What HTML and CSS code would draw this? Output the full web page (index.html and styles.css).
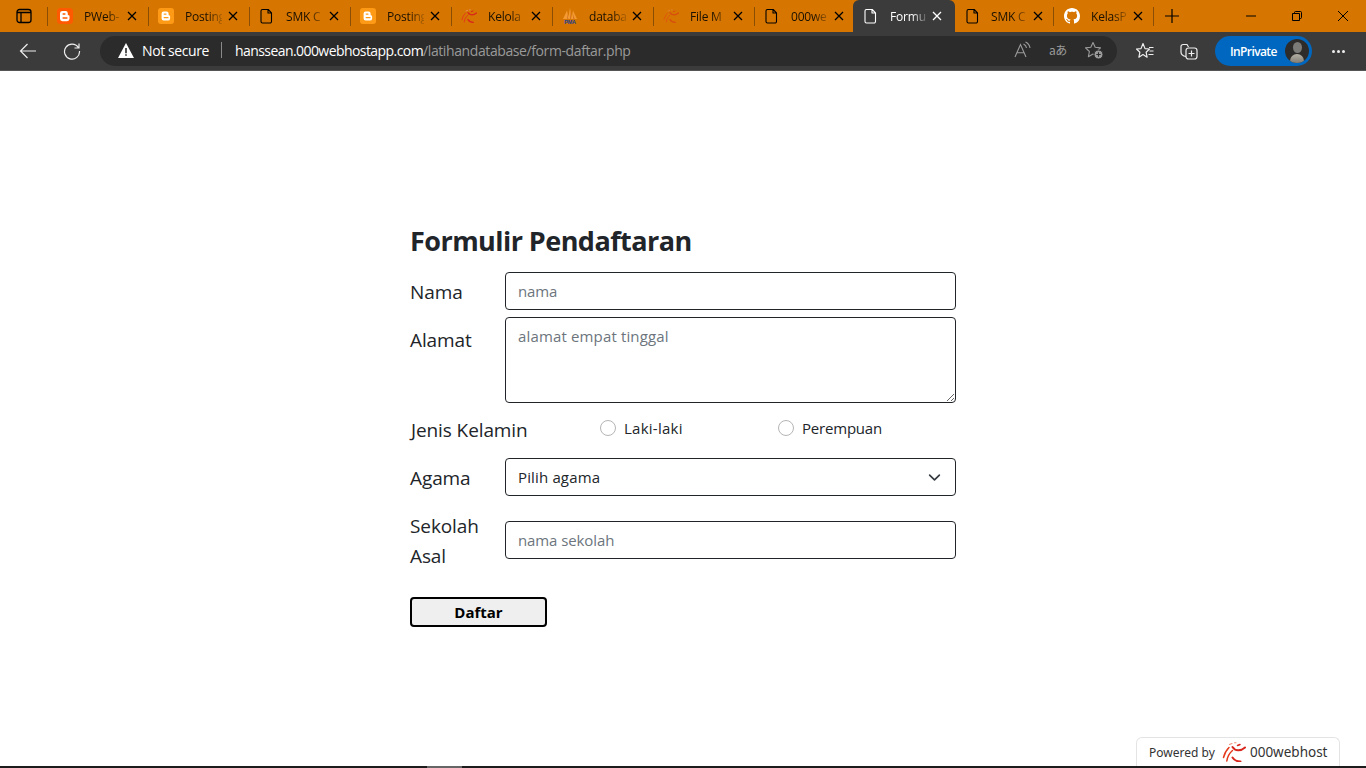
FILE: index.html
```html
<!DOCTYPE html>
<html lang="id">
<head>
<meta charset="utf-8">
<title>Formulir Pendaftaran</title>
<link rel="stylesheet" href="styles.css">
</head>
<body>
<svg class="defs" width="0" height="0" aria-hidden="true">
  <defs>
    <symbol id="i-blogger" viewBox="0 0 16 16">
      <rect width="16" height="16" rx="3" fill="#ff9a17"/>
      <path d="M5.6 3.6h3a2 2 0 0 1 2 2v1a.9.9 0 0 0 .9.9 .9.9 0 0 1 .6.9v2a2.2 2.2 0 0 1-2.2 2.2H5.600a2 2 0 0 1-2-2V5.600a2 2 0 0 1 2-2z" fill="#fff"/>
      <rect x="5.600" y="5.400" width="3" height="1.300" rx=".6" fill="#ff9a17"/>
      <rect x="5.600" y="9" width="5" height="1.300" rx=".6" fill="#ff9a17"/>
    </symbol>
    <symbol id="i-blogger2" viewBox="0 0 16 16">
      <rect width="16" height="16" rx="3.500" fill="#ff5a00"/>
      <path d="M5.400 3h3.200a2.200 2.200 0 0 1 2.200 2.200v1.200a.8.8 0 0 0 .8.8 .9.9 0 0 1 .9.9v2.700a2.400 2.400 0 0 1-2.400 2.400H5.400A2.400 2.400 0 0 1 3 10.800V5.400A2.400 2.400 0 0 1 5.400 3z" fill="#fff"/>
      <rect x="5.400" y="5.200" width="3.200" height="1.500" rx=".7" fill="#ff5a00"/>
      <rect x="5.400" y="9.300" width="5.200" height="1.500" rx=".7" fill="#ff5a00"/>
    </symbol>
    <symbol id="i-doc" viewBox="0 0 16 16">
      <path d="M3.500 1.500h5.700l3.300 3.400v8.600a1.500 1.500 0 0 1-1.500 1.500H3.500A1.500 1.500 0 0 1 2 13.500v-10.500A1.500 1.500 0 0 1 3.500 1.500zM9 1.700V5h3.300" fill="none" stroke="currentColor" stroke-width="1.100" stroke-linejoin="round"/>
    </symbol>
    <symbol id="i-x" viewBox="0 0 10 10">
      <path d="M1 1l8 8M9 1l-8 8" fill="none" stroke="currentColor" stroke-width="1.300"/>
    </symbol>
    <symbol id="i-000" viewBox="0 0 24 20">
      <g fill="none" stroke-linecap="round">
        <path d="M7 5.500C4.500 8 2.500 11 1.500 15.500" stroke="#e53a1c" stroke-width="1.500"/>
        <path d="M10.500 8.500C7.500 11 5.500 14.500 4.800 19" stroke="#e53a1c" stroke-width="1.500"/>
        <path d="M10.500 5C13 9 18.500 9.500 23 5.500" stroke="#d8261c" stroke-width="2"/>
        <path d="M10.500 15.500C12 18 15 19.500 18.500 19.500" stroke="#d8261c" stroke-width="2"/>
        <path d="M7.500 2.500 10 1.500M12.500 .8 14 .8" stroke="#f0907a" stroke-width="1.100"/>
        <path d="M15.500 3.500 18 2.500" stroke="#d8261c" stroke-width="1.500"/>
      </g>
    </symbol>
    <symbol id="i-pma" viewBox="0 0 16 16">
      <path d="M1 11 5 2.500 7 11zM6 11 8 0 10 11zM9.500 11 11 2.500 15 11z" fill="#f39a33"/>
      <path d="M5 5 6.300 11H5.500zM8.300 3 9.200 11H8.300zM11 6 12.500 11H11.500z" fill="#c8621a"/>
      <text class="pma-text" x="8" y="15.600" text-anchor="middle">PMA</text>
    </symbol>
    <symbol id="i-github" viewBox="0 0 16 16">
      <path fill="#fff" d="M8 0C3.580 0 0 3.580 0 8c0 3.540 2.290 6.530 5.470 7.590.400.070.550-.170.550-.380 0-.190-.010-.820-.010-1.490-2.010.370-2.530-.490-2.690-.940-.090-.230-.480-.940-.820-1.130-.280-.150-.680-.520-.010-.530.630-.010 1.080.580 1.230.820.720 1.210 1.870.870 2.330.660.070-.520.280-.870.510-1.070-1.780-.200-3.640-.890-3.640-3.950 0-.870.310-1.590.820-2.150-.080-.200-.360-1.020.080-2.120 0 0 .670-.210 2.200.820.640-.180 1.320-.270 2-.270s1.360.090 2 .270c1.530-1.040 2.200-.820 2.200-.820.440 1.100.160 1.920.080 2.120.510.560.820 1.270.820 2.150 0 3.070-1.870 3.750-3.650 3.950.290.250.540.730.540 1.480 0 1.070-.010 1.930-.010 2.200 0 .210.150.460.550.380A8.010 8.010 0 0 0 16 8c0-4.420-3.580-8-8-8z"/>
    </symbol>
  </defs>
</svg>

<div class="browser">
  <header class="tabstrip">
    <div class="strip-btn">
      <svg class="ic16" viewBox="0 0 16 16"><rect x="1" y="1.500" width="14" height="13" rx="2.500" fill="none" stroke="#000" stroke-width="1.300"/><path d="M1 4.500h14M5 4.500v9.500" fill="none" stroke="#000" stroke-width="1.300"/></svg>
    </div>
    <div class="tab"><svg class="fav"><use href="#i-blogger2"/></svg><span class="tab-title">PWeb-</span><svg class="close"><use href="#i-x"/></svg></div>
    <div class="tab"><svg class="fav"><use href="#i-blogger"/></svg><span class="tab-title">Posting</span><svg class="close"><use href="#i-x"/></svg></div>
    <div class="tab"><svg class="fav"><use href="#i-doc"/></svg><span class="tab-title">SMK C</span><svg class="close"><use href="#i-x"/></svg></div>
    <div class="tab"><svg class="fav"><use href="#i-blogger"/></svg><span class="tab-title">Posting</span><svg class="close"><use href="#i-x"/></svg></div>
    <div class="tab"><svg class="fav"><use href="#i-000"/></svg><span class="tab-title">Kelola</span><svg class="close"><use href="#i-x"/></svg></div>
    <div class="tab"><svg class="fav"><use href="#i-pma"/></svg><span class="tab-title">databa</span><svg class="close"><use href="#i-x"/></svg></div>
    <div class="tab"><svg class="fav faded"><use href="#i-000"/></svg><span class="tab-title">File M</span><svg class="close"><use href="#i-x"/></svg></div>
    <div class="tab"><svg class="fav"><use href="#i-doc"/></svg><span class="tab-title">000we</span><svg class="close"><use href="#i-x"/></svg></div>
    <div class="tab active"><svg class="fav"><use href="#i-doc"/></svg><span class="tab-title">Formu</span><svg class="close"><use href="#i-x"/></svg></div>
    <div class="tab after-active"><svg class="fav"><use href="#i-doc"/></svg><span class="tab-title">SMK C</span><svg class="close"><use href="#i-x"/></svg></div>
    <div class="tab last"><svg class="fav"><use href="#i-github"/></svg><span class="tab-title">KelasP</span><svg class="close"><use href="#i-x"/></svg></div>
    <div class="new-tab"><svg class="plus" viewBox="0 0 14 14"><path d="M7 0v14M0 7h14" fill="none" stroke="#000" stroke-width="1.200"/></svg></div>
    <div class="win-controls">
      <svg class="win" viewBox="0 0 10 10"><path d="M0 5h10" stroke="#000" fill="none"/></svg>
      <svg class="win" viewBox="0 0 10 10"><path d="M.5 2.500h7v7h-7zM2.500 2.500v-1a1 1 0 0 1 1-1h5a1 1 0 0 1 1 1v5a1 1 0 0 1-1 1h-1" stroke="#000" fill="none"/></svg>
      <svg class="win" viewBox="0 0 10 10"><path d="M0 0l10 10M10 0L0 10" stroke="#000" fill="none"/></svg>
    </div>
  </header>

  <nav class="toolbar">
    <div class="tool tool-back"><svg class="ic18" viewBox="0 0 18 18"><path d="M17 9H1.500M8.500 2 1.500 9l7 7" fill="none" stroke="#eee" stroke-width="1.200"/></svg></div>
    <div class="tool tool-refresh"><svg class="ic18" viewBox="0 0 18 18"><path d="M15.300 5.500A7.500 7.500 0 1 0 16.500 9M16 1.500v4.500h-4.500" fill="none" stroke="#eee" stroke-width="1.200"/></svg></div>
    <div class="omnibox">
      <svg class="warn" viewBox="0 0 16 15"><path d="M8 0 16 15H0z" fill="#fff"/><path d="M7.200 5h1.600v5.200H7.200zM7.200 11.200h1.600v1.600H7.200z" fill="#2b2b2b"/></svg>
      <span class="not-secure">Not secure</span>
      <span class="omni-sep"></span>
      <span class="url"><span class="url-host">hanssean.000webhostapp.com</span><span class="url-path">/latihandatabase/form-daftar.php</span></span>
      <div class="omni-actions">
        <svg class="ic18" viewBox="0 0 18 18"><path d="M2 16 7.500 3.500 13 16M4 11.800h7M10.500 3a5 5 0 0 1 3 4M12.500 1a8 8 0 0 1 4.500 6" fill="none" stroke="#9b9b9b" stroke-width="1.100"/></svg>
        <span class="translate">aあ</span>
        <svg class="ic18" viewBox="0 0 18 18"><path d="M8 1.500 10.200 6.300l5.300.600-3.900 3.600 1 5.200L8 13l-4.600 2.700 1-5.200L.5 6.900l5.300-.600z" fill="none" stroke="#9b9b9b" stroke-width="1.100" stroke-linejoin="round"/><circle cx="13.500" cy="13.500" r="4.500" fill="#9b9b9b" stroke="#2b2b2b" stroke-width="1"/><path d="M13.500 11.300v4.400M11.300 13.500h4.400" stroke="#2b2b2b" stroke-width="1.100"/></svg>
      </div>
    </div>
    <div class="tool tool-favs"><svg class="ic18" viewBox="0 0 18 18"><path d="M7 1.500 9 6.600l4.500.400-3.400 3.200 1 5L7 12.500 2.900 15.200l1-5L.5 7l4.500-.400z" fill="none" stroke="#eee" stroke-width="1.200" stroke-linejoin="round"/><path d="M13 5.500h4.500M13.500 9h4M12.500 12.500h5" stroke="#eee" stroke-width="1.200" fill="none"/></svg></div>
    <div class="tool tool-coll"><svg class="ic18" viewBox="0 0 18 18"><path d="M6 14.500C3 14 1 13 1 10V4.500a2 2 0 0 1 2-2h4l1.500 2.500" fill="none" stroke="#eee" stroke-width="1.200"/><rect x="6" y="6" width="11" height="11" rx="2.500" fill="none" stroke="#eee" stroke-width="1.200"/><path d="M11.500 8.500v6M8.500 11.500h6" stroke="#eee" stroke-width="1.200" fill="none"/></svg></div>
    <div class="inprivate">
      <span class="inprivate-text">InPrivate</span>
      <span class="avatar"><span class="avatar-head"></span><span class="avatar-body"></span></span>
    </div>
    <div class="more"><span class="dot"></span><span class="dot"></span><span class="dot"></span></div>
  </nav>

  <main class="page">
    <form class="form">
      <h1 class="form-title">Formulir Pendaftaran</h1>
      <div class="row">
        <label class="label label-nudge" for="nama">Nama</label>
        <input class="control" id="nama" type="text" placeholder="nama">
      </div>
      <div class="row row-top">
        <label class="label label-top" for="alamat">Alamat</label>
        <textarea class="control area" id="alamat" placeholder="alamat empat tinggal"></textarea>
      </div>
      <div class="row row-radio">
        <span class="label label-wide">Jenis Kelamin</span>
        <label class="radio"><input class="radio-input" type="radio" name="jk"><span class="radio-a">Laki-laki</span></label>
        <label class="radio"><input class="radio-input" type="radio" name="jk"><span class="radio-b">Perempuan</span></label>
      </div>
      <div class="row row-select">
        <label class="label label-nudge" for="agama">Agama</label>
        <div class="control select" id="agama"><span>Pilih agama</span><svg class="chev" viewBox="0 0 16 16"><path d="M2 5l6 6 6-6" fill="none" stroke="#343a40" stroke-width="2" stroke-linecap="round" stroke-linejoin="round"/></svg></div>
      </div>
      <div class="row row-school">
        <label class="label" for="sekolah">Sekolah Asal</label>
        <input class="control school" id="sekolah" type="text" placeholder="nama sekolah">
      </div>
      <button class="submit" type="button">Daftar</button>
    </form>
    <div class="badge">
      <span class="badge-text">Powered by</span>
      <svg class="badge-logo"><use href="#i-000"/></svg>
      <span class="badge-brand">000webhost</span>
    </div>
    <div class="taskbar-edge"><span class="edge-mark"></span></div>
  </main>
</div>
</body>
</html>
```
FILE: styles.css
```css
* { box-sizing: border-box; }
html, body { margin: 0; height: 100%; overflow: hidden; }
body { font-family: "Open Sans", "Noto Sans", "Liberation Sans", sans-serif; background: #fff; color: #212529; }
.defs { position: absolute; }
.browser { display: flex; flex-direction: column; height: 768px; }

/* tab strip */
.tabstrip { display: flex; align-items: stretch; height: 32px; background: #d67600; color: #000; }
.strip-btn { width: 47px; padding-left: 16px; display: flex; align-items: center; }
.ic16 { width: 16px; height: 16px; display: block; }
.ic18 { width: 18px; height: 18px; display: block; }
.plus { width: 14px; height: 14px; display: block; }
.tab { width: 101px; display: flex; align-items: center; padding-left: 10px; position: relative; font-size: 12px; letter-spacing: -.2px; color: #1a1000; }
.tab::before { content: ""; position: absolute; left: 0; top: 7px; height: 19px; width: 1px; background: #8a4f05; }
.tab.active::before, .tab.after-active::before { display: none; }
.tab.active { width: 102px; background: #3b3b3b; color: #fff; border-radius: 6px 6px 0 0; margin-left: -2px; }
.tab.after-active { width: 98px; }
.tab.last { width: 100px; padding-left: 11px; }
.fav { width: 16px; height: 16px; flex: none; color: #000; }
.tab.active .fav { color: #fff; }
.faded { opacity: .5; }
.pma-text { font-family: "Liberation Sans", sans-serif; font-size: 5.500px; font-weight: 700; fill: #24408e; letter-spacing: -.2px; }
.tab-title { margin-left: 11px; width: 37px; white-space: nowrap; flex: none;
  -webkit-mask-image: linear-gradient(to right, #000 60%, rgba(0,0,0,.2));
  mask-image: linear-gradient(to right, #000 60%, rgba(0,0,0,.2)); }
.active .tab-title, .last .tab-title { width: 36px; }
.after-active .tab-title { width: 36px; margin-left: 10px; }
.close { width: 10px; height: 10px; flex: none; margin-left: 6px; color: #000; }
.tab.active .close { color: #fff; }
.new-tab { width: 39px; display: flex; align-items: center; padding-left: 12px; position: relative; }
.new-tab::before { content: ""; position: absolute; left: 0; top: 7px; height: 19px; width: 1px; background: #8a4f05; }
.win-controls { margin-left: auto; display: flex; align-items: center; padding-right: 18px; gap: 36px; }
.win { width: 10px; height: 10px; display: block; }

/* toolbar */
.toolbar { display: flex; align-items: center; height: 39px; background: #3b3b3b; color: #fff; border-bottom: 1px solid #555; }
.tool { display: flex; align-items: center; justify-content: center; flex: none; }
.tool-back { width: 56px; }
.tool-refresh { width: 32px; }
.tool-favs { width: 56px; }
.tool-coll { width: 32px; }
.omnibox { flex: none; margin-left: 12px; width: 1017px; height: 30px; border-radius: 15px; background: #2b2b2b; display: flex; align-items: center; padding: 0 14px 2px 18px; font-size: 14px; }
.warn { width: 16px; height: 15px; flex: none; }
.not-secure { margin-left: 8px; white-space: nowrap; letter-spacing: -.4px; }
.omni-sep { width: 1px; height: 16px; background: #8a8a8a; margin: 0 13px 0 12px; flex: none; }
.url { white-space: nowrap; }
.url-host { color: #fff; letter-spacing: -.57px; }
.url-path { color: #9a9a9a; letter-spacing: -.4px; }
.omni-actions { margin-left: auto; display: flex; align-items: center; gap: 18px; }
.translate { width: 18px; font-family: "Noto Sans CJK JP", "Noto Sans", sans-serif; font-size: 12px; line-height: 18px; color: #9b9b9b; white-space: nowrap; text-align: center; letter-spacing: -.5px; }
.inprivate { flex: none; margin-left: 10px; width: 97px; height: 30px; border-radius: 15px; background: #0067c0; display: flex; align-items: center; padding: 0 3px 0 15px; justify-content: space-between; }
.inprivate-text { font-size: 12px; font-weight: 600; letter-spacing: -.6px; }
.avatar { width: 24px; height: 24px; border-radius: 50%; background: #2e2c2a; display: flex; flex-direction: column; align-items: center; overflow: hidden; }
.avatar-head { width: 9px; height: 11px; margin-top: 3px; border-radius: 50%; background: #7d7b78; flex: none; }
.avatar-body { width: 14px; height: 12px; margin-top: 1px; border-radius: 7px 7px 0 0; background: linear-gradient(#b5b0a5, #6f6b64); flex: none; }
.more { flex: none; margin-left: 20px; display: flex; gap: 2px; }
.dot { width: 3px; height: 3px; border-radius: 50%; background: #eee; }

/* page */
.page { flex: 1; position: relative; padding-top: 154px; }
.form { width: 546px; margin: 0 auto; }
.form-title { margin: 0; font-size: 27px; line-height: 32px; font-weight: 700; color: #212529; padding-bottom: 15px; letter-spacing: -.55px; }
.row { display: flex; align-items: center; margin-bottom: 7px; }
.row-top { align-items: flex-start; margin-bottom: 0; }
.label { flex: none; width: 95px; font-size: 19px; line-height: 30px; color: #212529; letter-spacing: -.1px; }
.label-nudge { padding-top: 2px; }
.label-top { padding-top: 8px; }
.label-wide { width: 190px; padding-left: 1px; }
.control { flex: 1; min-width: 0; height: 38px; border: 1px solid #212529; border-radius: 4px; padding: 0 12px; font: inherit; font-size: 15px; color: #212529; background: #fff; outline: 0; letter-spacing: -.1px; }
.control::placeholder { color: #6c757d; opacity: 1; }
.area { height: 86px; padding: 8px 12px; display: block; resize: vertical; margin-bottom: 12px; letter-spacing: .15px; }
.school { margin-bottom: 2px; }
.row-radio { margin-bottom: 13px; height: 30px; }
.radio { display: flex; align-items: center; font-size: 15px; width: 178px; margin-top: -4px; }
.radio-a { letter-spacing: .25px; }
.radio-b { letter-spacing: -.2px; }
.radio-input { appearance: none; -webkit-appearance: none; width: 16px; height: 16px; border: 1px solid #b5b5b5; border-radius: 50%; margin: 0 8px 0 0; background: #fff; flex: none; }
.row-select { margin-bottom: 15px; }
.select { display: flex; align-items: center; justify-content: space-between; padding-right: 14px; letter-spacing: .15px; }
.chev { width: 13px; height: 13px; }
.row-school { margin-bottom: 26px; }
.submit { display: block; width: 137px; height: 30px; background: #efefef; border: 2px solid #000; border-radius: 4px; font: inherit; font-size: 15px; font-weight: 700; color: #000; padding: 0; }

/* badge */
.badge { position: absolute; right: 26px; bottom: 2px; width: 204px; height: 29px; border: 1px solid #e4e4e4; border-bottom: 0; border-radius: 6px 6px 0 0; background: #fff; display: flex; align-items: center; padding-left: 12px; font-family: "Noto Sans", sans-serif; font-size: 12px; color: #333; }
.badge-text { letter-spacing: .02px; }
.badge-logo { width: 24px; height: 20px; margin-left: 7px; flex: none; }
.badge-brand { margin-left: 4px; font-size: 13.500px; }
.taskbar-edge { position: absolute; left: 0; right: 0; bottom: 0; height: 2px; background: #1c1c1c; }
.edge-mark { position: absolute; left: 427px; top: 0; width: 35px; height: 2px; background: #666; }
```
